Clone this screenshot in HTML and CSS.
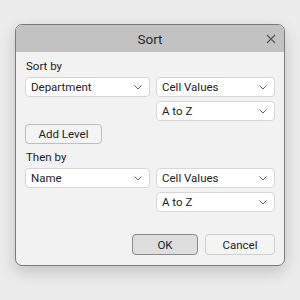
FILE: index.html
```html
<!DOCTYPE html>
<html lang="en">
<head>
  <meta charset="UTF-8" />
  <title>Sort</title>
  <link rel="stylesheet" href="styles.css">
</head>
<body>
  <div class="dialog">
    <div class="titlebar">
      <span class="title">Sort</span>
      <svg class="close" width="10" height="10" viewBox="0 0 10 10"><path d="M1 1L9 9M9 1L1 9" stroke="#555" stroke-width="1.1" fill="none"/></svg>
    </div>
    <div class="content">
      <div class="label">Sort by</div>
      <div class="grid">
        <div class="select">Department<svg class="chev" width="8" height="5" viewBox="0 0 8 5"><path d="M0.5 0.5L4 4L7.5 0.5" stroke="#666" fill="none"/></svg></div>
        <div class="select">Cell Values<svg class="chev" width="8" height="5" viewBox="0 0 8 5"><path d="M0.5 0.5L4 4L7.5 0.5" stroke="#666" fill="none"/></svg></div>
        <div></div>
        <div class="select">A to Z<svg class="chev" width="8" height="5" viewBox="0 0 8 5"><path d="M0.5 0.5L4 4L7.5 0.5" stroke="#666" fill="none"/></svg></div>
      </div>
      <button class="btn add">Add Level</button>
      <div class="label">Then by</div>
      <div class="grid">
        <div class="select">Name<svg class="chev" width="8" height="5" viewBox="0 0 8 5"><path d="M0.5 0.5L4 4L7.5 0.5" stroke="#666" fill="none"/></svg></div>
        <div class="select">Cell Values<svg class="chev" width="8" height="5" viewBox="0 0 8 5"><path d="M0.5 0.5L4 4L7.5 0.5" stroke="#666" fill="none"/></svg></div>
        <div></div>
        <div class="select">A to Z<svg class="chev" width="8" height="5" viewBox="0 0 8 5"><path d="M0.5 0.5L4 4L7.5 0.5" stroke="#666" fill="none"/></svg></div>
      </div>
      <div class="actions">
        <button class="btn ok">OK</button>
        <button class="btn cancel">Cancel</button>
      </div>
    </div>
  </div>
</body>
</html>
```

FILE: styles.css
```css
* {
  box-sizing: border-box;
}

body {
  margin: 0;
  width: 300px;
  height: 300px;
  background: #ececec;
  font-family: Roboto, "Noto Sans", sans-serif;
  color: #222;
  padding: 24px 15px 0;
}

.dialog {
  width: 270px;
  height: 242px;
  background: #f2f2f2;
  border: 1px solid #7a7a7a;
  border-radius: 7px;
  overflow: hidden;
  box-shadow: 0 6px 16px rgba(0, 0, 0, 0.18);
}

.titlebar {
  height: 27px;
  background: #c2c2c2;
  display: flex;
  align-items: center;
  justify-content: center;
  position: relative;
}

.title {
  font-size: 13.5px;
  color: #2a2a2a;
}

.close {
  position: absolute;
  right: 8px;
  top: 9px;
}

.content {
  padding: 7px 9px 0;
}

.label {
  font-size: 11.5px;
  height: 18px;
  line-height: 14px;
  padding-left: 1px;
}

.grid {
  display: grid;
  grid-template-columns: 125px 119px;
  column-gap: 6px;
  row-gap: 4px;
}

.select {
  height: 20px;
  background: #fff;
  border: 1px solid #d6d6d6;
  border-radius: 4px;
  font-size: 11.5px;
  line-height: 18px;
  padding-left: 5px;
  position: relative;
}

.chev {
  position: absolute;
  right: 7px;
  top: 7px;
}

.btn {
  font-family: inherit;
  font-size: 11.5px;
  color: #222;
  background: #f4f4f4;
  border: 1px solid #bdbdbd;
  border-radius: 4px;
  padding: 0;
  height: 20px;
}

.add {
  width: 77px;
  margin: 3px 0 6px;
}

.actions {
  display: flex;
  justify-content: flex-end;
  gap: 7px;
  margin-top: 22px;
}

.ok {
  width: 66px;
  height: 21px;
  background: #dedede;
  border-color: #8a8a8a;
}

.cancel {
  width: 70px;
  height: 21px;
  border-color: #cfcfcf;
}
```
